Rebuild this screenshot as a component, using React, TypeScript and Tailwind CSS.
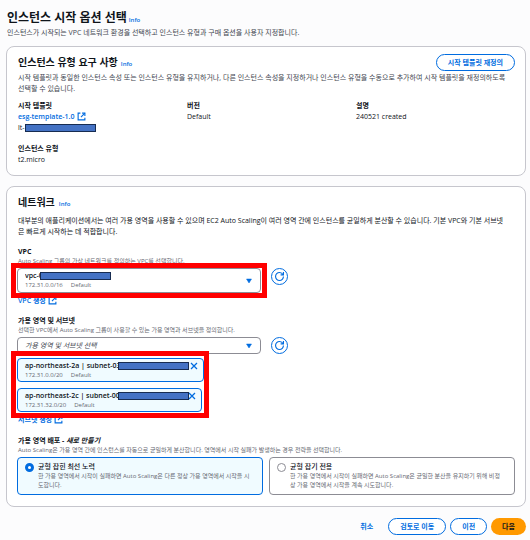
import { useState, type ReactNode } from "react";
import clsx from "clsx";

const ExternalIcon = () => (
  <svg viewBox="0 0 16 16" className="size-[9px] shrink-0" fill="none" stroke="currentColor" strokeWidth="2">
    <path d="M10 2h4v4" strokeLinecap="square" />
    <path d="m7 9 7-7" />
    <path d="M6 2H2v12h12v-4" />
  </svg>
);

const CaretIcon = () => (
  <svg viewBox="0 0 16 16" className="pointer-events-none size-2 shrink-0 text-[#006ce0]">
    <path d="M3 4h10l-5 8z" fill="currentColor" stroke="currentColor" />
  </svg>
);

const InfoLink = () => (
  <a href="#info" className="text-[6px] font-semibold text-[#006ce0]">
    Info
  </a>
);

// solid bar that hides the rest of an id
const Redacted = ({ className }: { className?: string }) => (
  <span className={clsx("block h-2 w-[71px] border border-[#172c51] bg-[#4472c4]", className)} />
);

const RefreshButton = ({ label }: { label: string }) => (
  <button
    type="button"
    aria-label={label}
    className="flex size-[17px] items-center justify-center rounded-full border border-[#006ce0] text-[#006ce0]"
  >
    <svg viewBox="0 0 16 16" className="size-[9px]" fill="none" stroke="currentColor" strokeWidth="2">
      <path d="M10 5h5V0" />
      <path d="M15 8a6.957 6.957 0 0 1-7 7 6.957 6.957 0 0 1-7-7 6.957 6.957 0 0 1 7-7 6.87 6.87 0 0 1 6.3 4" />
    </svg>
  </button>
);

const OutlineButton = ({ children }: { children: ReactNode }) => (
  <button
    type="button"
    className="h-[17px] rounded-full border border-[#006ce0] bg-white px-[11px] font-bold text-[#006ce0]"
  >
    {children}
  </button>
);

const subnets = [
  { id: "ap-northeast-2a | subnet-03", cidr: "172.31.0.0/20", width: "w-[187px]" },
  { id: "ap-northeast-2c | subnet-00", cidr: "172.31.32.0/20", width: "w-[185px]" },
];

const strategies = [
  {
    value: "best-effort",
    title: "균형 잡힌 최선 노력",
    text: "한 가용 영역에서 시작이 실패하면 Auto Scaling은 다른 정상 가용 영역에서 시작을 시도합니다.",
  },
  {
    value: "balanced-only",
    title: "균형 잡기 전용",
    text: "한 가용 영역에서 시작이 실패하면 Auto Scaling은 균일한 분산을 유지하기 위해 비정상 가용 영역에서 시작을 계속 시도합니다.",
  },
];

const App = () => {
  const [strategy, setStrategy] = useState("best-effort");

  return (
    <div className="min-h-screen bg-[#fcfcfd] pt-2 pr-1 pb-1 pl-1.5 font-['Open_Sans','Noto_Sans_CJK_KR',sans-serif] text-[7px] leading-[11px] text-[#0f141a]">
      <header className="pl-px">
        <div className="flex items-baseline gap-0.5">
          <h1 className="text-[12px] leading-[19px] font-semibold">인스턴스 시작 옵션 선택</h1>
          <InfoLink />
        </div>
        <p className="text-[#424650]">
          인스턴스가 시작되는 VPC 네트워크 환경을 선택하고 인스턴스 유형과 구매 옵션을 사용자 지정합니다.
        </p>
      </header>

      <section className="mt-2 rounded-lg border border-[#c6c6cd] bg-white pt-[7px] pr-2.5 pb-2.5 pl-[11px]">
        <div className="flex items-center justify-between">
          <div className="flex items-baseline gap-[3px]">
            <h2 className="text-[10px] leading-[14px] font-semibold">인스턴스 유형 요구 사항</h2>
            <InfoLink />
          </div>
          <OutlineButton>시작 템플릿 재정의</OutlineButton>
        </div>
        <p className="mt-px text-[#424650]">
          시작 템플릿과 동일한 인스턴스 속성 또는 인스턴스 유형을 유지하거나, 다른 인스턴스 속성을 지정하거나 인스턴스
          유형을 수동으로 추가하여 시작 템플릿을 재정의하도록
          <br />
          선택할 수 있습니다.
        </p>
        <dl className="mt-1.5 grid grid-cols-3 gap-2.5">
          <div>
            <dt className="font-bold">시작 템플릿</dt>
            <dd>
              <a href="#template" className="flex items-center gap-[3px] font-semibold text-[#006ce0]">
                esg-template-1.0 <ExternalIcon />
              </a>
            </dd>
            <dd className="flex items-center">
              lt-
              <Redacted />
            </dd>
          </div>
          <div>
            <dt className="font-bold">버전</dt>
            <dd>Default</dd>
          </div>
          <div>
            <dt className="font-bold">설명</dt>
            <dd>240521 created</dd>
          </div>
          <div>
            <dt className="font-bold">인스턴스 유형</dt>
            <dd>t2.micro</dd>
          </div>
        </dl>
      </section>

      <section className="mt-2.5 rounded-lg border border-[#c6c6cd] bg-white px-2.5 pt-2 pb-[11px]">
        <div className="pl-px">
          <div className="flex items-baseline gap-1">
            <h2 className="text-[10px] leading-[14px] font-semibold">네트워크</h2>
            <InfoLink />
          </div>
          <p className="mt-[5px]">
            대부분의 애플리케이션에서는 여러 가용 영역을 사용할 수 있으며 EC2 Auto Scaling이 여러 영역 간에 인스턴스를
            균일하게 분산할 수 있습니다. 기본 VPC와 기본 서브넷
            <br />은 빠르게 시작하는 데 적합합니다.
          </p>
        </div>

        <div className="mt-[9px]">
          <label htmlFor="vpc" className="block pl-px font-bold">
            VPC
          </label>
          <p className="pl-px text-[6px] leading-[9px] text-[#656871]">
            Auto Scaling 그룹의 가상 네트워크를 정의하는 VPC를 선택합니다.
          </p>
          <div className="mt-0.5 grid grid-cols-2 gap-2.5">
            <div className="relative flex items-center justify-between rounded-[4px] border border-[#8c8c94] bg-white px-[7px] py-[2px]">
              <div className="grow">
                <select id="vpc" className="block h-[10px] w-full appearance-none leading-[10px] font-semibold">
                  <option>vpc-0</option>
                </select>
                <p className="flex gap-2 text-[6px] leading-[9px] text-[#656871]">
                  <span>172.31.0.0/16</span>
                  <span>Default</span>
                </p>
              </div>
              <CaretIcon />
              <Redacted className="absolute top-[3px] left-[22px]" />
              <div className="pointer-events-none absolute -inset-x-[7px] -inset-y-1.5 z-10 border-[5px] border-[#ff0000]" />
            </div>
            <RefreshButton label="VPC 새로 고침" />
          </div>
          <a href="#create-vpc" className="mt-0.5 flex w-fit items-center gap-0.5 pl-px font-semibold text-[#006ce0]">
            VPC 생성 <ExternalIcon />
          </a>
        </div>

        <div className="mt-[9px]">
          <label htmlFor="subnet" className="block pl-px font-bold">
            가용 영역 및 서브넷
          </label>
          <p className="pl-px text-[6px] leading-[9px] text-[#656871]">
            선택한 VPC에서 Auto Scaling 그룹이 사용할 수 있는 가용 영역과 서브넷을 정의합니다.
          </p>
          <div className="mt-0.5 grid grid-cols-2 gap-2.5">
            <div className="flex items-center rounded-[4px] border border-[#8c8c94] bg-white px-[7px]">
              <select id="subnet" className="h-[15px] grow appearance-none text-[#424650] italic">
                <option>가용 영역 및 서브넷 선택</option>
              </select>
              <CaretIcon />
            </div>
            <RefreshButton label="서브넷 새로 고침" />
          </div>
          <div className="relative mt-1 w-[187px]">
            <ul className="space-y-1.5">
              {subnets.map((subnet) => (
                <li
                  key={subnet.id}
                  className={clsx(
                    "relative rounded-[4px] border border-[#006ce0] bg-[#f0fbff] py-px pr-[5px] pl-[7px]",
                    subnet.width
                  )}
                >
                  <div className="flex items-center justify-between">
                    <span className="font-semibold">{subnet.id}</span>
                    <button type="button" aria-label={`${subnet.id} 제거`} className="text-[#006ce0]">
                      <svg viewBox="0 0 16 16" className="size-2" fill="none" stroke="currentColor" strokeWidth="2.5">
                        <path d="m2 2 12 12M14 2 2 14" />
                      </svg>
                    </button>
                  </div>
                  <p className="flex gap-2 text-[6px] leading-[9px] text-[#656871]">
                    <span>{subnet.cidr}</span>
                    <span>Default</span>
                  </p>
                  <Redacted className="absolute top-[3px] left-[100px]" />
                </li>
              ))}
            </ul>
            <div className="pointer-events-none absolute -top-[7px] -right-[5px] -bottom-1.5 -left-1.5 z-10 border-[5px] border-[#ff0000]" />
          </div>
          <a href="#create-subnet" className="mt-0.5 flex w-fit items-center gap-0.5 pl-px font-semibold text-[#006ce0]">
            서브넷 생성 <ExternalIcon />
          </a>
        </div>

        <fieldset className="mt-2.5">
          <legend className="pl-px font-bold">
            가용 영역 배포 - <em>새로 만들기</em>
          </legend>
          <p className="pl-px text-[6px] leading-[9px] text-[#656871]">
            Auto Scaling은 가용 영역 간에 인스턴스를 자동으로 균일하게 분산합니다. 영역에서 시작 실패가 발생하는 경우
            전략을 선택합니다.
          </p>
          <div className="mt-0.5 grid grid-cols-2 gap-1.5">
            {strategies.map((item) => (
              <label
                key={item.value}
                className={clsx(
                  "flex gap-1 rounded-[4px] border py-1 pr-2.5 pl-[7px]",
                  strategy === item.value
                    ? "border-[#006ce0] bg-[#f0fbff]"
                    : "border-[#8c8c94] bg-white"
                )}
              >
                <input
                  type="radio"
                  name="strategy"
                  value={item.value}
                  checked={strategy === item.value}
                  onChange={() => setStrategy(item.value)}
                  className="mt-px size-[9px] shrink-0 appearance-none rounded-full border border-[#8c8c94] bg-white checked:border-3 checked:border-[#006ce0]"
                />
                <span>
                  <span className="block leading-[10px] font-medium">{item.title}</span>
                  <span className="block text-[6px] leading-[9px] text-[#656871]">{item.text}</span>
                </span>
              </label>
            ))}
          </div>
        </fieldset>
      </section>

      <footer className="mt-[11px] flex justify-end gap-1">
        <button type="button" className="mr-[11px] font-bold text-[#006ce0]">
          취소
        </button>
        <OutlineButton>검토로 이동</OutlineButton>
        <OutlineButton>이전</OutlineButton>
        <button type="button" className="h-[17px] rounded-full bg-[#ff9900] px-[11px] font-bold">
          다음
        </button>
      </footer>
    </div>
  );
};

export default App;
